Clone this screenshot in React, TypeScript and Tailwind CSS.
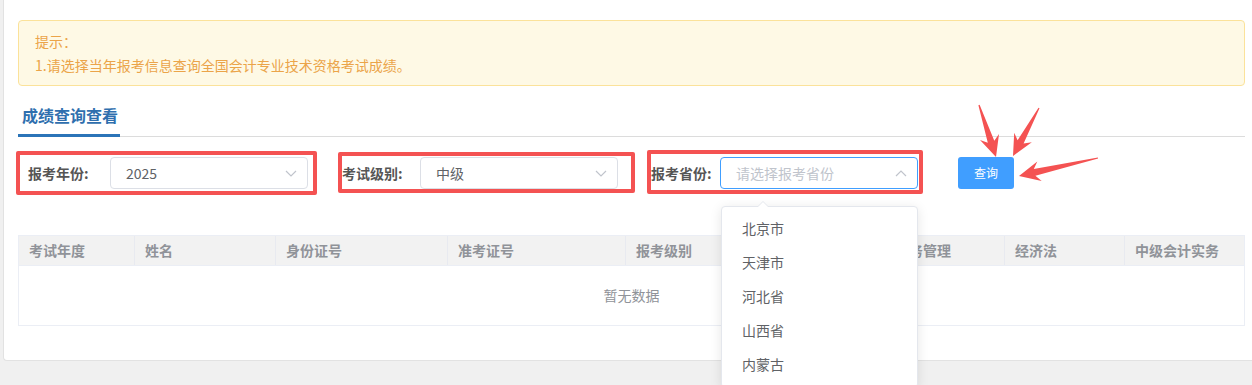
const cjk = "font-['Noto_Sans_CJK_SC','Noto_Sans',sans-serif]";

const columns = [
  "考试年度",
  "姓名",
  "身份证号",
  "准考证号",
  "报考级别",
  "财务管理",
  "经济法",
  "中级会计实务",
];

const provinces = ["北京市", "天津市", "河北省", "山西省", "内蒙古"];

// snipaste-style arrow: pointed tail, swept-back head
const arrowPoints = (
  x1: number,
  y1: number,
  x2: number,
  y2: number,
  head = 21,
  half = 10,
  shaft = 3.4,
) => {
  const dx = x2 - x1;
  const dy = y2 - y1;
  const len = Math.hypot(dx, dy);
  const ux = dx / len;
  const uy = dy / len;
  const px = -uy;
  const py = ux;
  const at = (u: number, v: number) =>
    `${(x1 + ux * u + px * v).toFixed(1)},${(y1 + uy * u + py * v).toFixed(1)}`;
  return [
    at(0, 0.6),
    at(len - head + 5, shaft),
    at(len - head, half),
    at(len, 0),
    at(len - head, -half),
    at(len - head + 5, -shaft),
    at(0, -0.6),
  ].join(" ");
};

const Chevron = ({ up = false }: { up?: boolean }) => (
  <svg width="12" height="7" viewBox="0 0 12 7" className="shrink-0">
    <polyline
      points={up ? "1,6 6,1 11,6" : "1,1 6,6 11,1"}
      fill="none"
      stroke="#c0c4cc"
      strokeWidth="1.2"
    />
  </svg>
);

const Select = ({
  value,
  placeholder,
  open = false,
}: {
  value?: string;
  placeholder?: string;
  open?: boolean;
}) => (
  <div
    className={`flex h-[32px] w-[198px] items-center justify-between rounded-[4px] border bg-white pl-[15px] pr-[10px] text-[14px] ${
      open ? "border-[#409eff]" : "border-[#dcdfe6]"
    }`}
  >
    {value ? (
      <span className="text-[#606266]">{value}</span>
    ) : (
      <span className="text-[#c0c4cc]">{placeholder}</span>
    )}
    <Chevron up={open} />
  </div>
);

export default function App() {
  return (
    <div
      className={`relative h-[385px] w-full overflow-hidden bg-[#f0f0f0] ${cjk}`}
    >
      <div className="ml-[3px] h-[361px] rounded-bl-[4px] border-b border-l border-[#e2e2e2] bg-white pl-[14px] pr-[7px] pt-[20px]">
        {/* notice */}
        <div className="h-[66px] rounded-[4px] border border-[#fbe29a] bg-[#fef9e5] pl-[16px] pt-[8px] text-[14px] leading-[24px] text-[#eba449]">
          <p>提示：</p>
          <p>1.请选择当年报考信息查询全国会计专业技术资格考试成绩。</p>
        </div>

        {/* tabs */}
        <div className="mt-[11px] flex border-b border-[#dcdcdc]">
          <div className="-mb-px h-[40px] w-[102px] border-b-[3px] border-[#2b74b8] pl-[4px] pt-[6px] text-[16px] font-bold leading-[24px] text-[#2f6fae]">
            成绩查询查看
          </div>
        </div>

        {/* form */}
        <div className="mt-[20px] flex items-center text-[14px]">
          <label className="ml-[10px] w-[82px] font-bold text-[#555]">
            报考年份:
          </label>
          <Select value="2025" />
          <label className="ml-[34px] w-[78px] font-bold text-[#555]">
            考试级别:
          </label>
          <Select value="中级" />
          <label className="ml-[33px] w-[69px] font-bold text-[#555]">
            报考省份:
          </label>
          <Select placeholder="请选择报考省份" open />
          <button className="ml-[40px] h-[32px] w-[56px] rounded-[3px] bg-[#409eff] text-[12px] text-white">
            查询
          </button>
        </div>

        {/* table */}
        <div className="mt-[46px] border border-[#ebeef5]">
          <div className="grid h-[30px] grid-cols-[116px_141px_172px_178px_259px_120px_120px_1fr] border-b border-[#ebeef5] bg-[#f2f2f2]">
            {columns.map((c, i) => (
              <div
                key={c}
                className={`flex items-center pl-[10px] text-[14px] font-bold text-[#909399] ${
                  i < columns.length - 1 ? "border-r border-[#e8eaf0]" : ""
                }`}
              >
                {c}
              </div>
            ))}
          </div>
          <div className="flex h-[59px] items-center justify-center text-[14px] text-[#909399]">
            暂无数据
          </div>
        </div>
      </div>

      {/* dropdown */}
      <div className="absolute left-[721px] top-[206px] w-[197px] rounded-[4px] border border-[#e4e7ed] bg-white pb-[6px] pt-[4px] shadow-[0_2px_12px_rgba(0,0,0,0.1)]">
        <div className="absolute -top-[6px] left-[35px] h-0 w-0 border-x-[6px] border-b-[6px] border-x-transparent border-b-[#e4e7ed]" />
        <div className="absolute -top-[5px] left-[36px] h-0 w-0 border-x-[5px] border-b-[5px] border-x-transparent border-b-white" />
        {provinces.map((p) => (
          <div
            key={p}
            className="h-[34px] px-[20px] text-[14px] leading-[34px] text-[#606266]"
          >
            {p}
          </div>
        ))}
      </div>

      {/* annotation boxes */}
      <div className="pointer-events-none absolute left-[16px] top-[151px] h-[44px] w-[301px] rounded-[2px] border-[4px] border-[#f45252]" />
      <div className="pointer-events-none absolute left-[338px] top-[152px] h-[41px] w-[297px] rounded-[2px] border-[4px] border-[#f45252]" />
      <div className="pointer-events-none absolute left-[647px] top-[150px] h-[44px] w-[276px] rounded-[2px] border-[4px] border-[#f45252]" />

      {/* annotation arrows */}
      <svg
        className="pointer-events-none absolute left-0 top-0"
        width="1252"
        height="385"
      >
        <polygon points={arrowPoints(979, 105, 996, 157)} fill="#f45252" />
        <polygon points={arrowPoints(1039, 108, 1013, 156)} fill="#f45252" />
        <polygon points={arrowPoints(1098, 158, 1019, 176)} fill="#f45252" />
      </svg>
    </div>
  );
}
